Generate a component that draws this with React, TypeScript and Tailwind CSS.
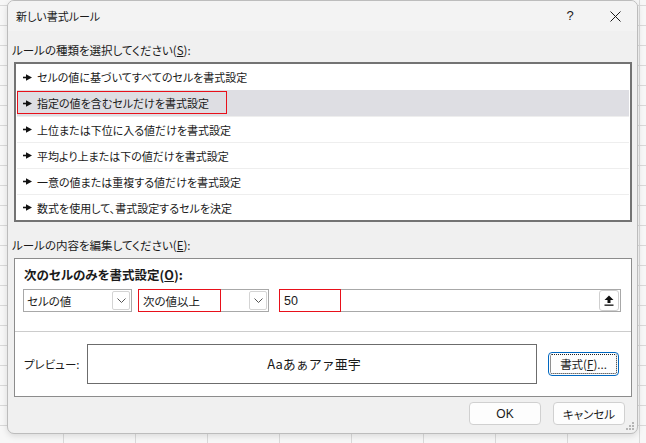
import React from 'react';

const rules = [
  'セルの値に基づいてすべてのセルを書式設定',
  '指定の値を含むセルだけを書式設定',
  '上位または下位に入る値だけを書式設定',
  '平均より上または下の値だけを書式設定',
  '一意の値または重複する値だけを書式設定',
  '数式を使用して、書式設定するセルを決定',
];

const Pointer = () => (
  <svg width="9" height="7" viewBox="0 0 9 7" className="shrink-0">
    <rect x="0" y="2.7" width="3.5" height="1.6" fill="#111" />
    <polygon points="3,0.3 9,3.5 3,6.7" fill="#111" />
  </svg>
);

const Chevron = () => (
  <div className="w-[18px] h-[19px] border border-[#d4d4d4] rounded-[2px] bg-white flex items-center justify-center">
    <svg width="9" height="5" viewBox="0 0 9 5">
      <path d="M0.5 0.5 L4.5 4.5 L8.5 0.5" stroke="#555" fill="none" strokeWidth="1" />
    </svg>
  </div>
);

export default function App() {
  return (
    <div
      className="w-[646px] h-[443px] overflow-hidden bg-[#f7f7f7] bg-[linear-gradient(to_right,#d9d9d9_1px,transparent_1px),linear-gradient(to_bottom,#d9d9d9_1px,transparent_1px)] bg-[size:72px_20px] bg-[position:63px_5px] font-['Noto_Sans_CJK_JP',sans-serif] [font-feature-settings:'palt'] text-[11px] text-[#1a1a1a]"
    >
      <div className="relative ml-[7px] w-[631px] h-[434px] rounded-[7px] border border-[#bcbcbc] bg-[#f0f0f0] shadow-[0_2px_6px_rgba(0,0,0,0.12)] overflow-hidden">
        {/* title bar */}
        <div className="h-[30px] bg-[#f3f3f3] flex items-center pl-[8px]">
          <span className="leading-[16px] text-[11px]">新しい書式ルール</span>
          <span className="ml-auto w-[10px] text-center text-[13px] font-['Liberation_Sans',sans-serif]">?</span>
          <svg width="11" height="11" viewBox="0 0 11 11" className="ml-[35px] mr-[16px]">
            <path d="M0.5 0.5 L10.5 10.5 M10.5 0.5 L0.5 10.5" stroke="#1a1a1a" strokeWidth="1" />
          </svg>
        </div>

        <div className="pl-[6px]">
          <div className="h-[31px] pt-[11px] leading-[16px] -ml-[2px] text-[11.5px]">
            ルールの種類を選択してください(<span className="underline">S</span>):
          </div>

          <div className="w-[618px] h-[160px] border-2 border-[#737373] bg-white p-px pt-0">
            {rules.map((r, i) => (
              <div
                key={r}
                className={`h-[26px] flex items-center gap-[5px] pl-[6px] ${i === 1 ? 'bg-[#dedee3]' : ''} ${i >= 2 ? 'border-t border-[#eeeeee]' : ''} relative`}
              >
                <Pointer />
                <span className="leading-[16px] text-[11px]">{r}</span>
                {i === 1 && (
                  <div className="absolute left-0 top-px w-[210px] h-[23px] border-[1.5px] border-[#e8101a]" />
                )}
              </div>
            ))}
          </div>

          <div className="h-[36px] pt-[15px] leading-[16px] -ml-[2px] text-[11.5px]">
            ルールの内容を編集してください(<span className="underline">E</span>):
          </div>

          <div className="w-[618px] h-[139px] border border-[#8c8c8c] bg-white">
            <div className="h-[30px] pt-[8px] pl-[9px] font-bold leading-[16px] text-[12.5px]">
              次のセルのみを書式設定(<span className="underline">O</span>):
            </div>
            <div className="flex pl-[8px] h-[23px] text-[11.5px]">
              <div className="w-[109px] border border-[#a8a8a8] flex items-center pl-[3px] pr-px">
                <span className="leading-[16px]">セルの値</span>
                <div className="ml-auto"><Chevron /></div>
              </div>
              <div className="ml-[6px] w-[131px] border border-[#a8a8a8] flex items-center pr-px relative">
                <div className="w-[83px] h-[23px] -my-px -ml-px border-[1.5px] border-[#e8101a] flex items-center pl-[4px] shrink-0">
                  <span className="leading-[16px]">次の値以上</span>
                </div>
                <div className="ml-auto"><Chevron /></div>
              </div>
              <div className="ml-[10px] w-[342px] border border-[#a8a8a8] flex items-center pr-px">
                <div className="w-[62px] h-[23px] -my-px -ml-px border-[1.5px] border-[#e8101a] flex items-center pl-[4px] shrink-0">
                  <span className="leading-[16px] font-['Liberation_Sans',sans-serif] text-[12.5px]">50</span>
                </div>
                <div className="ml-auto w-[20px] h-[21px] border border-[#cfcfcf] rounded-[3px] bg-white flex items-center justify-center">
                  <svg width="10" height="11" viewBox="0 0 10 11">
                    <path d="M5 0.5 L9.5 5 L6.5 5 L6.5 8 L3.5 8 L3.5 5 L0.5 5 Z" fill="#111" />
                    <rect x="0.5" y="9.5" width="9" height="1.3" fill="#111" />
                  </svg>
                </div>
              </div>
            </div>
            <div className="mt-[19px] h-px bg-[#cccccc]" />
            <div className="flex items-center h-[64px] pl-[9px] text-[11.5px]">
              <span className="leading-[16px] w-[63px] shrink-0">プレビュー:</span>
              <div className="w-[450px] h-[40px] border border-[#6c6c6c] flex items-center justify-center">
                <span className="text-[13px] [font-feature-settings:normal] leading-[18px] ml-[4px]">Aaあぁアァ亜宇</span>
              </div>
              <div className="ml-[11px] w-[71px] h-[24px] rounded-[4px] border border-[#0067c0] bg-[#fdfdfd] p-px">
                <div className="w-full h-full border border-dotted border-[#222] rounded-[2px] flex items-center justify-center">
                  <span className="leading-[16px]">書式(<span className="underline">F</span>)...</span>
                </div>
              </div>
            </div>
          </div>

          <div className="flex justify-end pr-[12px] pt-[5px] gap-[12px] text-[11.5px]">
            <div className="w-[72px] h-[23px] rounded-[4px] border border-[#d0d0d0] bg-[#fdfdfd] flex items-center justify-center">
              <span className="leading-[16px] font-['Liberation_Sans',sans-serif] text-[12px]">OK</span>
            </div>
            <div className="w-[72px] h-[23px] rounded-[4px] border border-[#d0d0d0] bg-[#fdfdfd] flex items-center justify-center">
              <span className="leading-[16px]">キャンセル</span>
            </div>
          </div>
        </div>

        <svg width="8" height="8" viewBox="0 0 8 8" className="absolute right-[3px] bottom-[3px]">
          <rect x="6" y="0" width="2" height="2" fill="#b5b5b5" />
          <rect x="3" y="3" width="2" height="2" fill="#b5b5b5" />
          <rect x="6" y="3" width="2" height="2" fill="#b5b5b5" />
          <rect x="0" y="6" width="2" height="2" fill="#b5b5b5" />
          <rect x="3" y="6" width="2" height="2" fill="#b5b5b5" />
          <rect x="6" y="6" width="2" height="2" fill="#b5b5b5" />
        </svg>
      </div>
    </div>
  );
}
